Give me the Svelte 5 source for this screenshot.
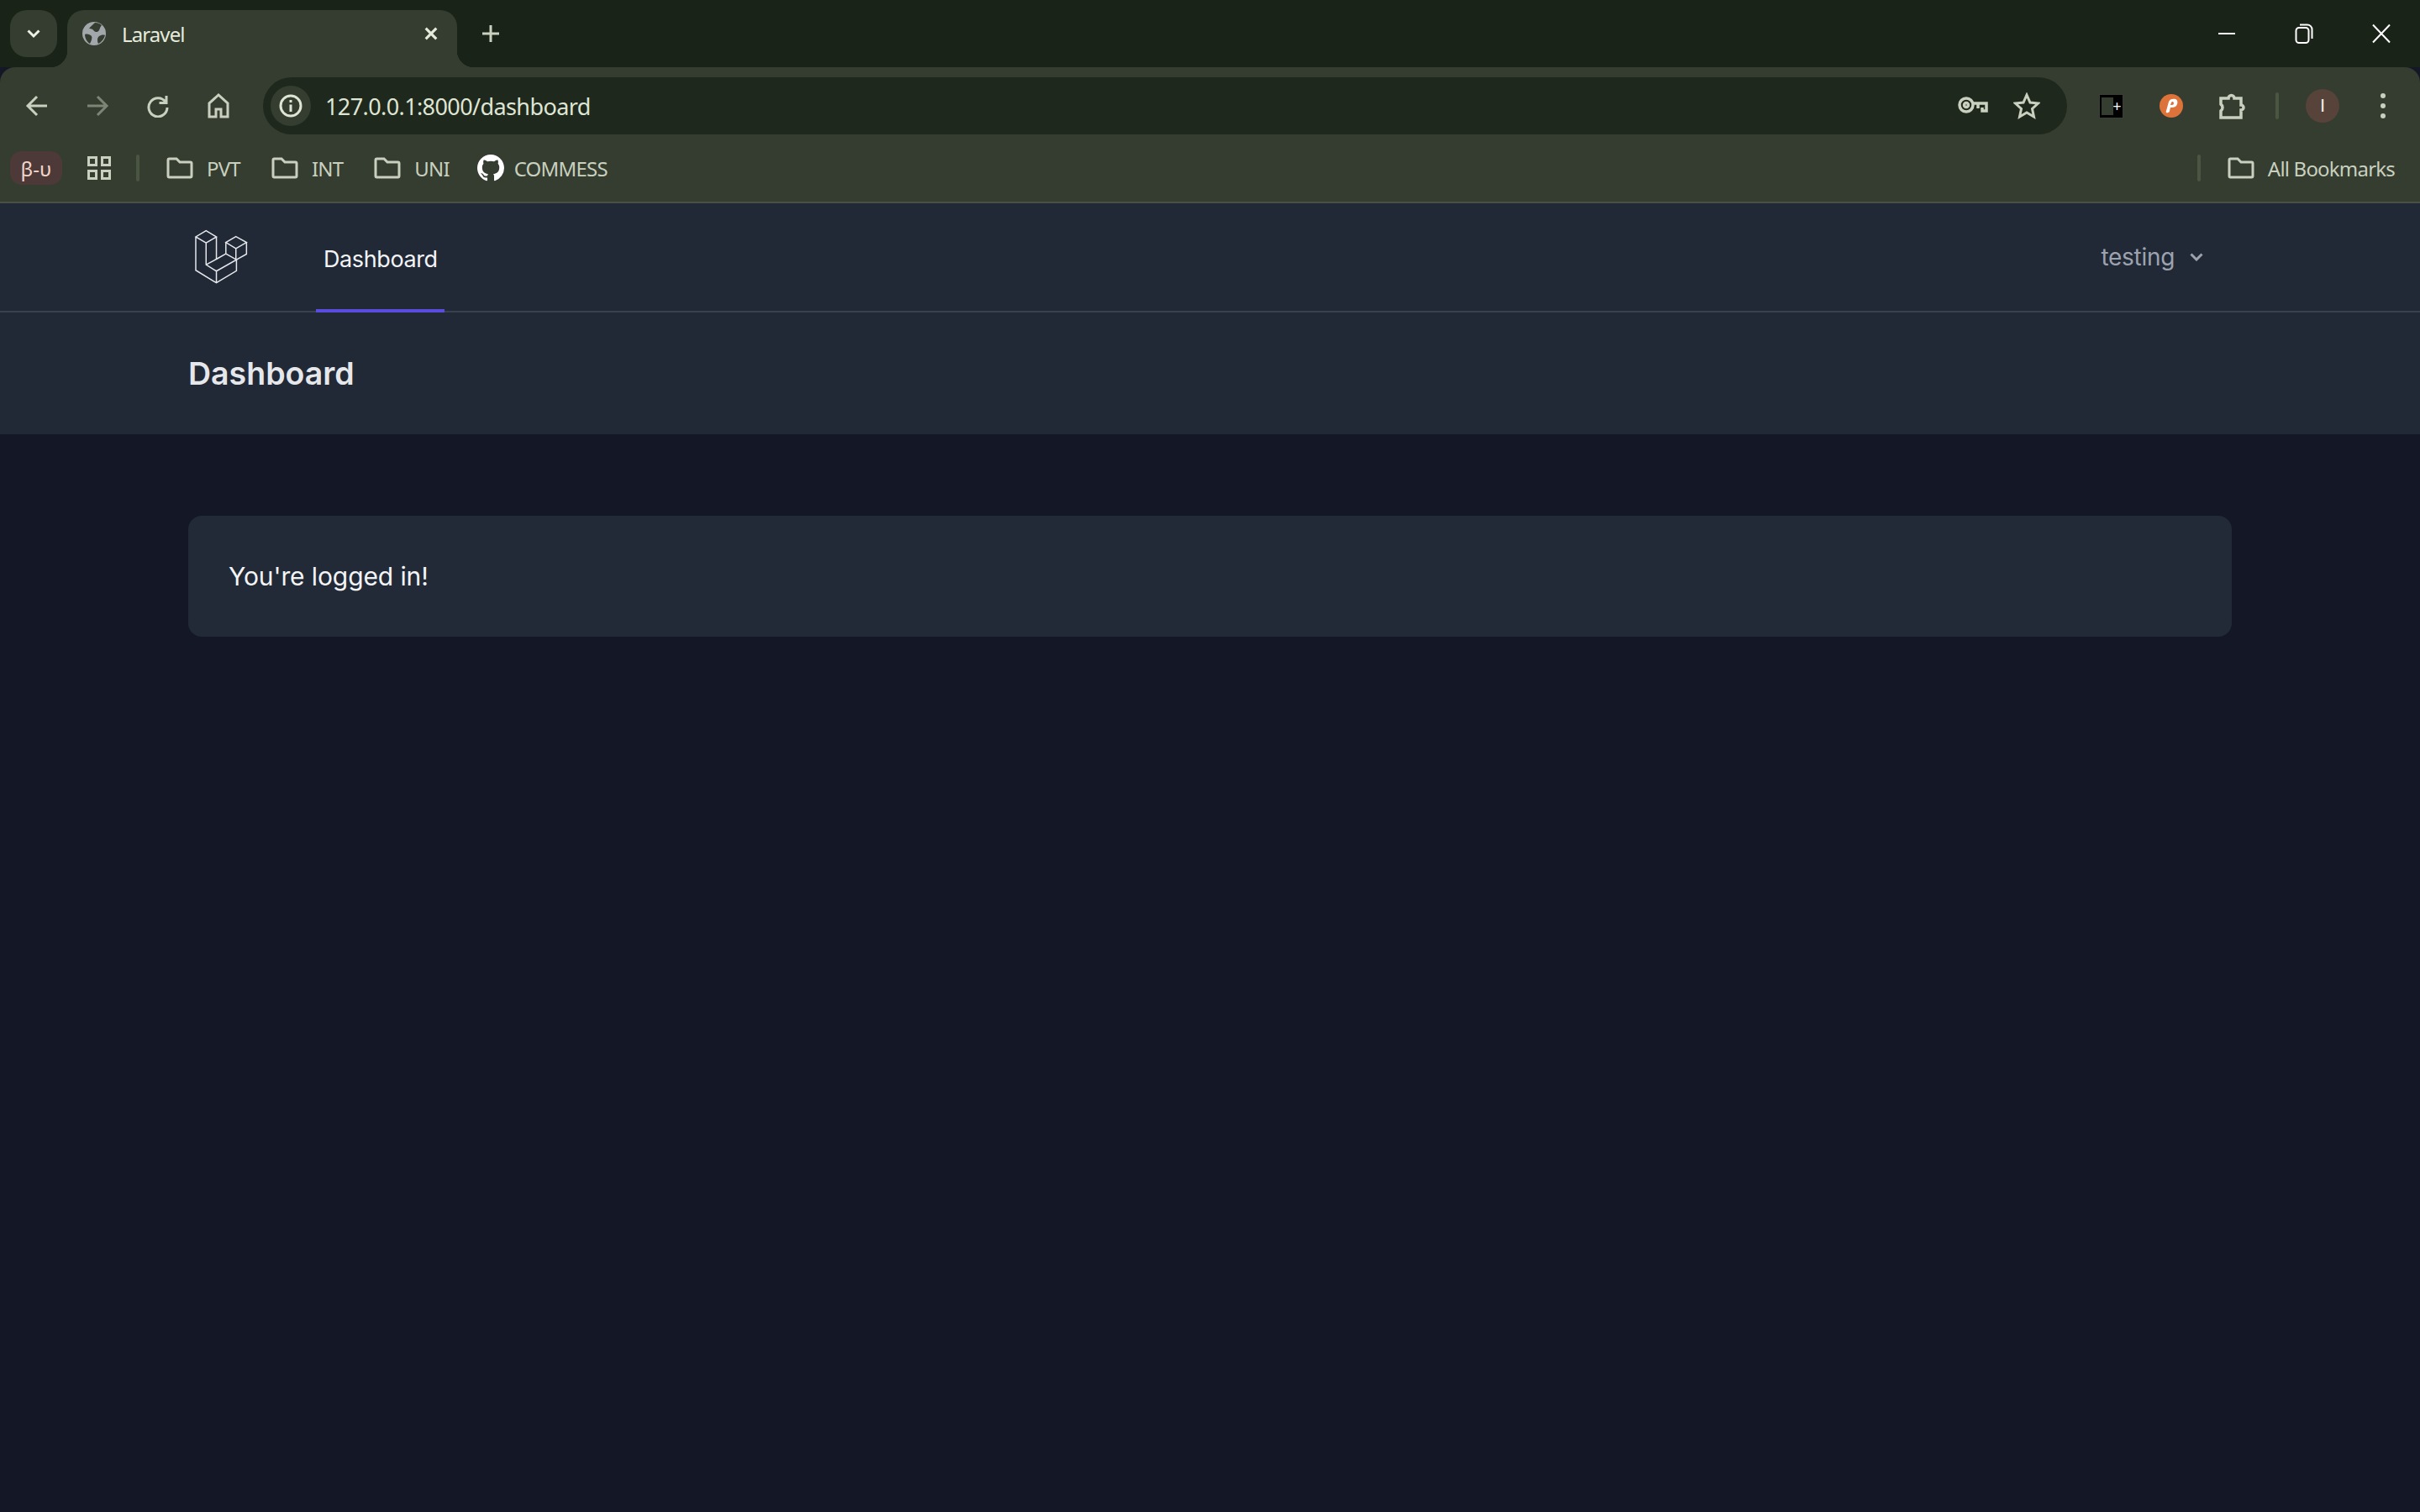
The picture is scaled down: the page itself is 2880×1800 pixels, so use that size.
<script>
    const folders = ['PVT', 'INT', 'UNI'];
</script>

<div class="page">
    <div class="tabstrip">
        <button class="tab-search">
            <svg width="20" height="20" viewBox="0 0 20 20"><path d="M3.500 6.500 10 13l6.500-6.500" /></svg>
        </button>
        <div class="tab">
            <svg class="favicon" width="28" height="28" viewBox="0 0 28 28">
                <circle cx="14" cy="14" r="14" fill="#a2a7ab" />
                <path d="M15 1c-2 2-5 4-7 7 3 0 5 1 6 3 2 2 5 1 6-1 1-3 2-5 3-6-2-2-5-3-8-3ZM3 15c3-1 6 0 8 2 1 2 0 5-2 9-3-2-6-6-6-11ZM20 17c2-1 4-2 7-1-1 4-4 8-8 10-1-2-1-3-1-5 0-2 1-3 2-4Z" fill="#343d2f" />
            </svg>
            <span class="tab-title">Laravel</span>
            <svg class="tab-close" width="20" height="20" viewBox="0 0 20 20"><path d="M3 3l14 14M17 3 3 17" /></svg>
        </div>
        <button class="new-tab">
            <svg width="22" height="22" viewBox="0 0 22 22"><path d="M11 1v20M1 11h20" /></svg>
        </button>
        <div class="window-controls">
            <button><svg width="20" height="20" viewBox="0 0 20 20"><path d="M0 10h20" /></svg></button>
            <button><svg width="22" height="24" viewBox="0 0 22 24"><rect x="1.500" y="5" width="15" height="18" rx="3.500" /><path d="M6 1.500h9c3 0 5.500 2.500 5.500 5.500v11" /></svg></button>
            <button><svg width="22" height="24" viewBox="0 0 22 24"><path d="M1 1.500l20 21M21 1.500l-20 21" /></svg></button>
        </div>
    </div>

    <div class="chrome-body">
        <div class="toolbar">
            <div class="icon-btn">
                <svg width="28" height="28" viewBox="0 0 28 28"><path d="M26 14H4M14 3 3 14l11 11" /></svg>
            </div>
            <div class="icon-btn dim">
                <svg width="28" height="28" viewBox="0 0 28 28"><path d="M2 14h22M14 3l11 11-11 11" /></svg>
            </div>
            <div class="icon-btn">
                <svg width="28" height="28" viewBox="0 0 28 28"><path d="M23 9.500A11 11 0 1 0 25 16M24 2v8.500h-8.500" /></svg>
            </div>
            <div class="icon-btn">
                <svg width="28" height="30" viewBox="0 0 28 30"><path d="M14 2 3 12v16h8v-9h6v9h8V12L14 2Z" /></svg>
            </div>
            <div class="omnibox">
                <div class="info-chip">
                    <svg width="28" height="28" viewBox="0 0 28 28"><circle cx="14" cy="14" r="12" /><path d="M14 12.500V21M14 7v3" /></svg>
                </div>
                <span class="url">127.0.0.1:8000/dashboard</span>
                <div class="omni-actions">
                    <svg class="key" width="36" height="22" viewBox="0 0 36 22"><circle cx="10" cy="10" r="8" /><circle cx="10" cy="10" r="2.500" /><path d="M18 8h16v9h-5v-4M24 8v6" /></svg>
                    <svg width="32" height="32" viewBox="0 0 32 32"><path d="m16 3 4 9 9.500 1-7 6.500 2 9.500-8.500-5-8.500 5 2-9.500-7-6.500 9.500-1 4-9Z" /></svg>
                </div>
            </div>
            <div class="toolbar-right">
                <div class="icon-btn">
                    <span class="ext-black"><span class="ext-slot"></span><span class="ext-plus">+</span></span>
                </div>
                <div class="icon-btn">
                    <svg class="raw" width="30" height="30" viewBox="0 0 30 30">
                        <circle cx="15" cy="15" r="14" fill="#dd733a" />
                        <path d="M11 23c-1 1-3 0-2-2l3-11c1-3 5-4 8-3s3 5 1 8c-2 2-5 2-7 2l-1 4c0 1-1 2-2 2Zm4-12-1 3c2 0 4 0 4-2s-2-3-3-1Z" fill="#fff" />
                    </svg>
                </div>
                <div class="icon-btn">
                    <svg class="puzzle" width="32" height="34" viewBox="0 0 32 34"><path d="M3 8h9a3.500 3.500 0 0 1 7 0h8v8a3 3 0 0 1 0 6v9H3v-8a5 5 0 0 0 0-8V8Z" /></svg>
                </div>
                <span class="vrule"></span>
                <div class="icon-btn">
                    <span class="avatar">I</span>
                </div>
                <div class="icon-btn">
                    <span class="dots"><i></i><i></i><i></i></span>
                </div>
            </div>
        </div>

        <div class="bookmarks">
            <span class="pill">β-υ</span>
            <svg class="apps" width="28" height="28" viewBox="0 0 28 28">
                <rect x="1.500" y="1.500" width="9" height="9" /><rect x="17.500" y="1.500" width="9" height="9" />
                <rect x="1.500" y="17.500" width="9" height="9" /><rect x="17.500" y="17.500" width="9" height="9" />
            </svg>
            <span class="vrule"></span>
            {#each folders as name}
                <div class="bookmark">
                    <svg width="32" height="26" viewBox="0 0 32 26"><path d="M2 3.500c0-1 .5-1.500 1.500-1.500h8.500l4 4h12.500c1 0 1.500.5 1.500 1.500v15c0 1-.5 1.500-1.500 1.500h-25c-1 0-1.500-.5-1.500-1.500v-19Z" /></svg>
                    <span>{name}</span>
                </div>
            {/each}
            <div class="bookmark github">
                <svg class="raw" width="32" height="32" viewBox="0 0 16 16">
                    <path fill="#fff" d="M8 0C3.580 0 0 3.580 0 8c0 3.540 2.290 6.530 5.470 7.590.4.070.55-.17.55-.38 0-.19-.01-.82-.01-1.490-2.010.37-2.530-.49-2.690-.94-.09-.23-.48-.94-.82-1.130-.28-.15-.68-.52-.01-.53.63-.01 1.080.58 1.230.82.72 1.210 1.870.87 2.330.66.07-.52.28-.87.51-1.070-1.780-.2-3.640-.89-3.640-3.950 0-.87.31-1.590.82-2.150-.08-.2-.36-1.020.08-2.120 0 0 .67-.21 2.200.82.64-.18 1.320-.27 2-.27.68 0 1.360.09 2 .27 1.530-1.040 2.200-.82 2.200-.82.44 1.100.16 1.920.08 2.120.51.56.82 1.270.82 2.150 0 3.070-1.870 3.750-3.650 3.950.29.25.54.73.54 1.480 0 1.070-.01 1.930-.01 2.200 0 .21.15.46.55.38A8.013 8.013 0 0 0 16 8c0-4.420-3.580-8-8-8z" />
                </svg>
                <span>COMMESS</span>
            </div>
            <span class="vrule push"></span>
            <div class="bookmark all">
                <svg width="32" height="26" viewBox="0 0 32 26"><path d="M2 3.500c0-1 .5-1.500 1.500-1.500h8.500l4 4h12.500c1 0 1.500.5 1.500 1.500v15c0 1-.5 1.500-1.500 1.500h-25c-1 0-1.500-.5-1.500-1.500v-19Z" /></svg>
                <span>All Bookmarks</span>
            </div>
        </div>
    </div>

    <nav class="nav">
        <svg class="logo" width="67" height="68" viewBox="150 95 200 205">
            <path d="M195 103 232 125 195 147 158 125ZM158 125V245L232 290 304 247V207M195 147V225L232 248V290M232 125V205L195 225M232 248 304 207 266 186 232 205M302 124 340 145 302 167 266 145ZM266 145V186M340 145V187L304 207M302 167V207" />
        </svg>
        <a class="nav-link" href="/dashboard">Dashboard</a>
        <button class="user">
            <span>testing</span>
            <svg width="16" height="10" viewBox="0 0 16 10"><path d="M1.500 1.500 8 8l6.500-6.500" /></svg>
        </button>
    </nav>

    <header class="page-header">
        <h2>Dashboard</h2>
    </header>

    <main class="content">
        <div class="card">You're logged in!</div>
    </main>
</div>

<style>
:global(body) {
    margin: 0;
    background: #131726;
}

.page {
    min-height: 1800px;
    display: flex;
    flex-direction: column;
    background: #131726;
    font-family: Inter, "Noto Sans", sans-serif;
}

svg {
    fill: none;
    stroke: #c9d0bf;
    stroke-width: 3;
    display: block;
}

svg.raw {
    stroke: none;
}

button {
    background: none;
    border: 0;
    padding: 0;
    font: inherit;
}

/* Tab strip */
.tabstrip {
    height: 80px;
    display: flex;
    align-items: flex-start;
    background: #1a2318;
    padding: 12px 0 0 12px;
    box-sizing: border-box;
}

.tab-search {
    width: 56px;
    height: 56px;
    border-radius: 20px;
    margin-right: 12px;
    background: #343d2f;
    display: flex;
    align-items: center;
    justify-content: center;
}

.tab-search svg {
    stroke: #eef2e6;
}

.tab {
    position: relative;
    width: 464px;
    height: 68px;
    background: #343d2f;
    border-radius: 20px 20px 0 0;
    display: flex;
    align-items: center;
    padding: 0 22px 12px 18px;
    box-sizing: border-box;
    font-family: "Noto Sans", sans-serif;
}

.tab::before,
.tab::after {
    content: '';
    position: absolute;
    bottom: 0;
    width: 20px;
    height: 20px;
}

.tab::before {
    left: -20px;
    background: radial-gradient(circle at 0 0, transparent 20px, #343d2f 20.5px);
}

.tab::after {
    right: -20px;
    background: radial-gradient(circle at 100% 0, transparent 20px, #343d2f 20.5px);
}

.favicon {
    stroke: none;
}

.tab-title {
    margin-left: 19px;
    font-size: 24px;
    letter-spacing: -0.9px;
    color: #e6ebdd;
    flex: 1;
}

.tab-close {
    stroke: #e6ebdd;
    stroke-width: 3.500;
    width: 18px;
    height: 18px;
}

.new-tab {
    width: 72px;
    height: 56px;
    margin-left: 4px;
    display: flex;
    align-items: center;
    justify-content: center;
}

.window-controls {
    margin-left: auto;
    margin-top: -12px;
    display: flex;
}

.window-controls button {
    width: 92px;
    height: 80px;
    display: flex;
    align-items: center;
    justify-content: center;
}

.window-controls svg {
    stroke: #fff;
    stroke-width: 2;
}

/* Toolbar */
.chrome-body {
    background: #343d2f;
    border-radius: 18px 18px 0 0;
    border-bottom: 2px solid #4b5046;
    font-family: "Noto Sans", sans-serif;
}

.toolbar {
    height: 68px;
    display: flex;
    align-items: center;
    padding: 12px 8px 0;
}

.icon-btn {
    width: 72px;
    height: 68px;
    flex: none;
    display: flex;
    align-items: center;
    justify-content: center;
}

.icon-btn.dim svg {
    stroke: #7d8676;
}

.omnibox {
    flex: 1;
    height: 68px;
    margin: 0 16px 0 17px;
    border-radius: 34px;
    background: #1f281c;
    display: flex;
    align-items: center;
    padding: 0 32px 0 9px;
}

.info-chip {
    width: 48px;
    height: 48px;
    border-radius: 50%;
    background: #343d2f;
    display: flex;
    align-items: center;
    justify-content: center;
}

.info-chip svg {
    stroke: #dfe5d5;
}

.url {
    margin-left: 17px;
    font-size: 27px;
    letter-spacing: -0.6px;
    color: #dfe5d5;
}

.omni-actions {
    margin-left: auto;
    display: flex;
    align-items: center;
    gap: 30px;
}

.key {
    stroke-width: 3.500;
}

.puzzle {
    stroke-width: 3.500;
}

.toolbar-right {
    display: flex;
    align-items: center;
}

.vrule {
    width: 4px;
    height: 32px;
    border-radius: 2px;
    background: #4a5542;
    flex: none;
}

.toolbar-right .vrule {
    margin: 0 16px;
}

.ext-black {
    width: 29px;
    height: 29px;
    background: #000;
    box-sizing: border-box;
    border: 1px solid #3a3f36;
    display: flex;
    align-items: center;
    justify-content: flex-end;
    position: relative;
}

.ext-slot {
    position: absolute;
    left: 2px;
    top: 3px;
    bottom: 3px;
    width: 14px;
    background: #343d2f;
}

.ext-plus {
    color: #fff;
    font-size: 18px;
    line-height: 1;
    margin-right: 1px;
}

.avatar {
    width: 40px;
    height: 40px;
    border-radius: 50%;
    background: #57433a;
    color: #eee;
    display: flex;
    align-items: center;
    justify-content: center;
    font-family: "Liberation Sans", sans-serif;
    font-size: 22px;
}

.dots {
    display: flex;
    flex-direction: column;
    gap: 6px;
}

.dots i {
    width: 6px;
    height: 6px;
    border-radius: 50%;
    background: #c9d0bf;
}

/* Bookmarks bar */
.bookmarks {
    height: 80px;
    display: flex;
    align-items: center;
    padding: 0 30px 0 12px;
    font-size: 24px;
    letter-spacing: -0.8px;
    color: #c9d0bf;
}

.pill {
    width: 62px;
    height: 40px;
    border-radius: 14px;
    background: #4d3a38;
    color: #f0d5c8;
    display: flex;
    align-items: center;
    justify-content: center;
    font-size: 24px;
    letter-spacing: 0;
}

.apps {
    margin-left: 30px;
}

.bookmarks > .vrule {
    margin-left: 30px;
}

.bookmark {
    display: flex;
    align-items: center;
    gap: 16px;
    margin-left: 37px;
}

.bookmark.github {
    margin-left: 33px;
    gap: 12px;
}

.bookmarks > .vrule + .bookmark {
    margin-left: 32px;
}

.vrule.push {
    margin-left: auto;
}

/* App nav */
.nav {
    height: 128px;
    display: flex;
    align-items: stretch;
    background: #212836;
    border-bottom: 2px solid #3a404d;
    padding: 0 258px 0 230px;
}

.logo {
    stroke: #e5e7eb;
    stroke-width: 4.500;
    align-self: flex-start;
    margin-top: 30px;
}

.nav-link {
    margin-left: 79px;
    margin-bottom: -2px;
    padding: 6px 8px 0 9px;
    display: flex;
    align-items: center;
    border-bottom: 4px solid #5a4cdc;
    color: #f3f4f6;
    font-size: 27px;
    letter-spacing: -0.4px;
    text-decoration: none;
}

.user {
    margin-left: auto;
    display: flex;
    align-items: center;
    gap: 18px;
    color: #9ca3af;
    font-size: 28px;
    letter-spacing: -0.3px;
}

.user svg {
    stroke: #9ca3af;
}

/* Page header */
.page-header {
    height: 145px;
    padding: 0 224px;
    background: #212836;
    display: flex;
    align-items: center;
}

.page-header h2 {
    margin: 0;
    font-size: 37.500px;
    font-weight: 580;
    color: #e5e7eb;
}

/* Content */
.content {
    padding: 97px 224px 0;
}

.card {
    height: 144px;
    padding: 0 48px;
    border-radius: 16px;
    background: #222a37;
    color: #f3f4f6;
    font-size: 30px;
    letter-spacing: -0.1px;
    display: flex;
    align-items: center;
}
</style>
